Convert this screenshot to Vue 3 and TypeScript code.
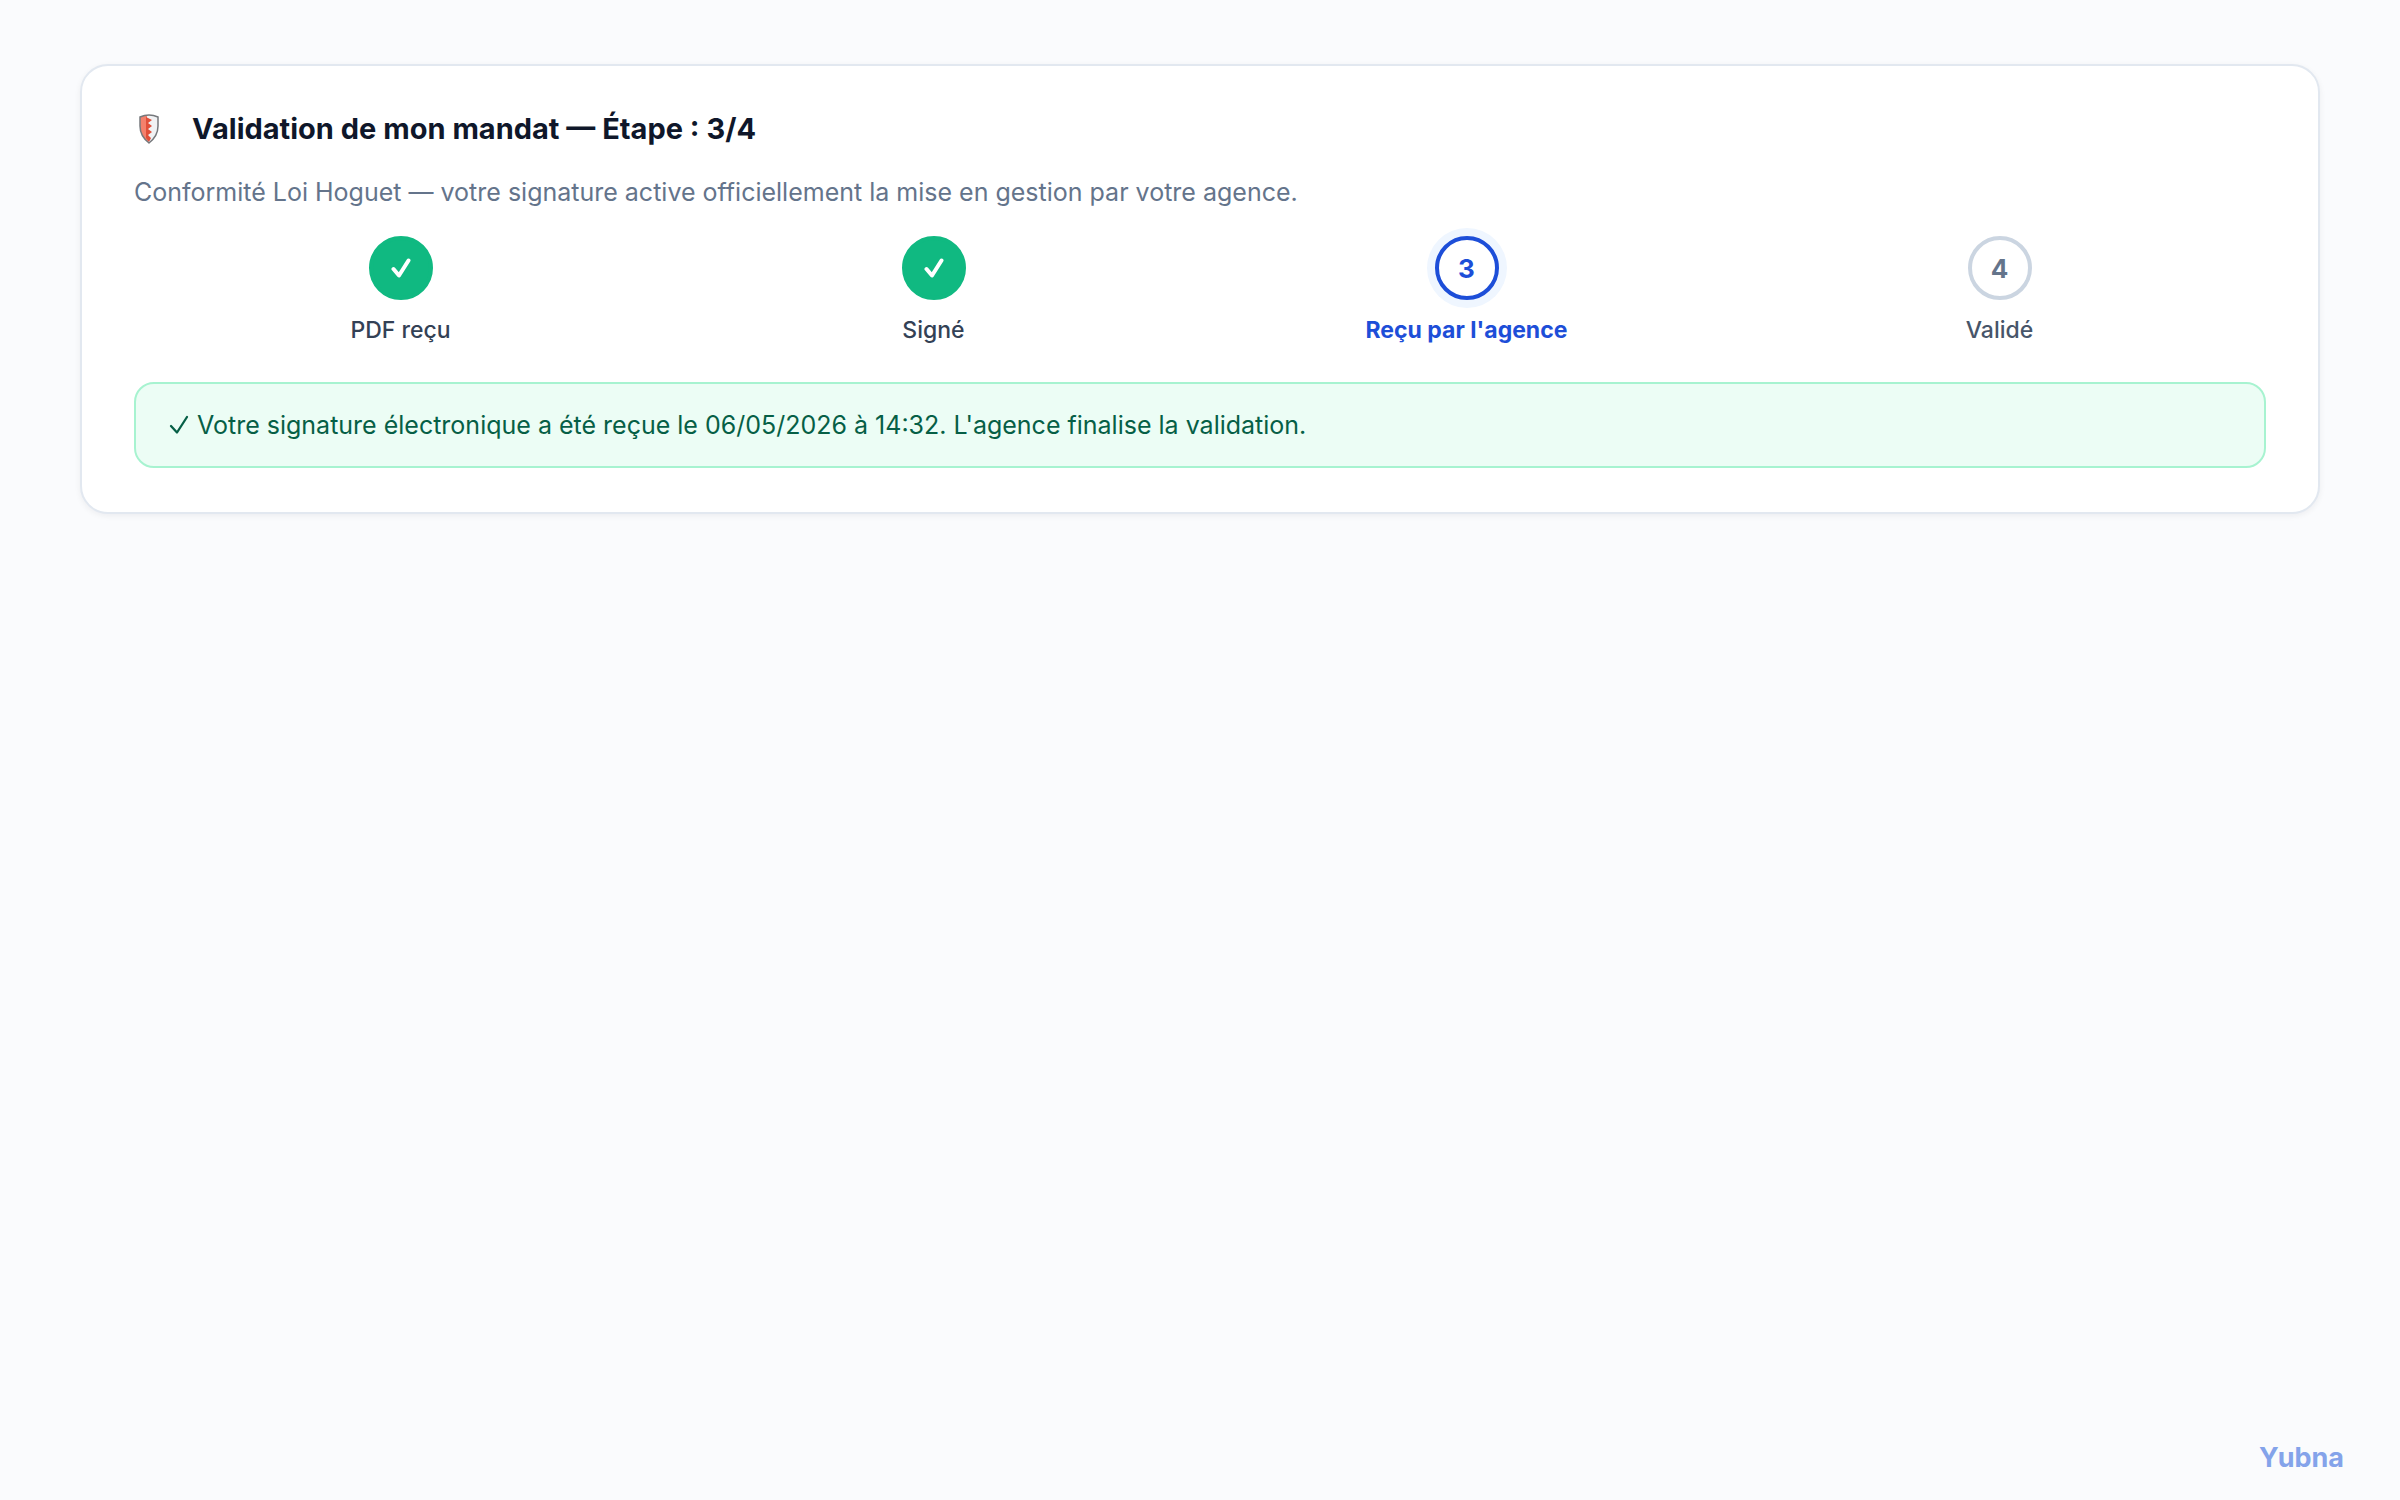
<script setup lang="ts">
interface Step {
  label: string
  state: 'done' | 'current' | 'todo'
}

const steps: Step[] = [
  { label: 'PDF reçu', state: 'done' },
  { label: 'Signé', state: 'done' },
  { label: "Reçu par l'agence", state: 'current' },
  { label: 'Validé', state: 'todo' },
]
</script>

<template>
  <div class="page">
    <main class="card">
      <h1 class="title">
        <svg class="shield" viewBox="0 0 20 30" aria-hidden="true">
          <path d="M1 3Q10-1 19 3V12Q19 22 10 29Q1 22 1 12Z" fill="#f1f2f4" />
          <path d="M1 3Q5 1 8 1V23L10 29Q1 22 1 12Z" fill="#f4806c" />
          <path d="M7 3L13 6L9 9L13 12L9 15L13 18L9 21L12 24L10 28L7 24Z" fill="#e04f3a" />
          <path d="M1 3Q10-1 19 3V12Q19 22 10 29Q1 22 1 12Z" fill="none" stroke="#75787c" stroke-width="1.5" />
        </svg>
        <span>Validation de mon mandat — Étape : 3/4</span>
      </h1>
      <p class="subtitle">Conformité Loi Hoguet — votre signature active officiellement la mise en gestion par votre agence.</p>
      <ol class="steps">
        <li v-for="(step, i) in steps" :key="step.label" class="step" :class="step.state">
          <span class="dot">
            <svg v-if="step.state === 'done'" class="check" viewBox="0 0 20 20" aria-hidden="true">
              <path d="M2.5 11L8 17.5L17.5 2.5" fill="none" stroke="#fff" stroke-width="4" stroke-linecap="round" stroke-linejoin="round" />
            </svg>
            <template v-else>{{ i + 1 }}</template>
          </span>
          <span class="label">{{ step.label }}</span>
        </li>
      </ol>
      <p class="notice" role="status">
        <svg class="tick" viewBox="0 0 20 20" aria-hidden="true">
          <path d="M2 11L8 17.5L18 2" fill="none" stroke="#065f46" stroke-width="2.3" stroke-linecap="round" stroke-linejoin="round" />
        </svg>
        <span>Votre signature électronique a été reçue le 06/05/2026 à 14:32. L'agence finalise la validation.</span>
      </p>
    </main>
    <footer class="brand">Yubna</footer>
  </div>
</template>

<style>
body {
  margin: 0;
  background: #fafbfd;
}
</style>

<style scoped>
.page {
  box-sizing: border-box;
  min-height: 100vh;
  display: flex;
  flex-direction: column;
  padding: 64px 80px 24px;
  font-family: Inter, "Liberation Sans", sans-serif;
  color: #0f172a;
}
.card {
  padding: 43px 52px 44px;
  background: #fff;
  border: 2px solid #e2e8f0;
  border-radius: 28px;
  box-shadow: 0 2px 6px rgba(15, 23, 42, 0.06);
}
.title {
  display: flex;
  align-items: center;
  gap: 32px;
  margin: 0 0 23px;
  font-size: 29px;
  line-height: 40px;
  font-weight: 700;
}
.shield {
  width: 22px;
  height: 30px;
  margin-left: 4px;
}
.subtitle {
  margin: 0 0 24px;
  font-size: 25px;
  line-height: 40px;
  color: #64748b;
}
.steps {
  display: flex;
  margin: 0 0 34px;
  padding: 0;
  list-style: none;
}
.step {
  flex: 1;
  display: flex;
  flex-direction: column;
  align-items: center;
  gap: 12px;
}
.dot {
  box-sizing: border-box;
  width: 64px;
  height: 64px;
  display: flex;
  align-items: center;
  justify-content: center;
  border: 4px solid #cbd5e1;
  border-radius: 50%;
  background: #fff;
  font-size: 26px;
  font-weight: 700;
  color: #64748b;
}
.label {
  font-size: 23px;
  line-height: 36px;
  font-weight: 500;
  color: #475569;
}
.done .dot {
  border-color: #10b981;
  background: #10b981;
}
.done .label {
  color: #334155;
}
.current .dot {
  border-color: #1d4ed8;
  color: #1d4ed8;
  box-shadow: 0 0 0 8px #eff6ff;
}
.current .label {
  font-weight: 700;
  color: #1d4ed8;
}
.check {
  width: 20px;
  height: 20px;
}
.notice {
  display: flex;
  align-items: center;
  gap: 8px;
  margin: 0;
  padding: 22px 33px;
  border: 2px solid #a7f3d0;
  border-radius: 20px;
  background: #ecfdf5;
  font-size: 25px;
  line-height: 38px;
  color: #065f46;
}
.tick {
  width: 20px;
  height: 20px;
}
.brand {
  margin: auto -24px 0 0;
  align-self: flex-end;
  font-size: 27px;
  line-height: 36px;
  font-weight: 700;
  color: #84a3ea;
}
</style>
